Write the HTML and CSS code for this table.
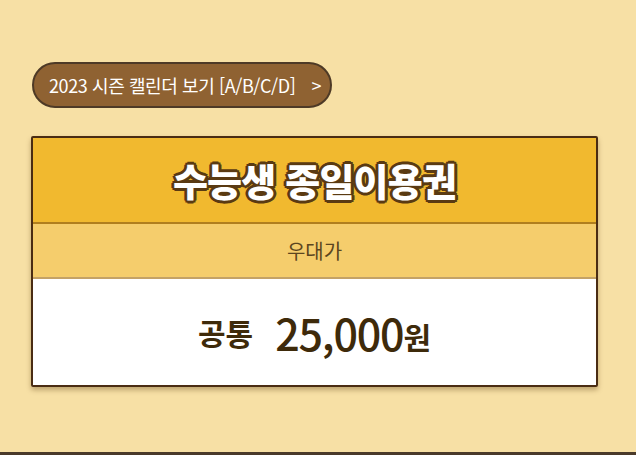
FILE: index.html
```html
<!DOCTYPE html>
<html lang="ko">
<head>
    <meta charset="UTF-8">
    <meta name="viewport" content="width=device-width, initial-scale=1.0">
    <title>수능생 종일이용권</title>
    <link rel="stylesheet" href="styles.css">
</head>
<body>
    <div class="wrap">
        <a class="cal-btn" href="#">2023 시즌 캘린더 보기 [A/B/C/D]<span class="arrow">&gt;</span></a>
        <div class="ticket">
            <div class="ticket-title">수능생 종일이용권</div>
            <div class="ticket-sub">우대가</div>
            <div class="ticket-price">
                <span class="label">공통</span>
                <span class="num">25,000</span><span class="won">원</span>
            </div>
        </div>
    </div>
    <div class="foot"></div>
</body>
</html>
```

FILE: styles.css
```css
* {
    padding: 0;
    margin: 0;
    box-sizing: border-box;
}
body {
    background: #f7e0a5;
    font-family: "Noto Sans CJK KR", "Noto Sans", sans-serif;
    overflow: hidden;
}
.wrap {
    height: 452px;
    padding: 62px 38px 0 31px;
}
.cal-btn {
    display: flex;
    align-items: center;
    width: 300px;
    height: 46px;
    margin-left: 1px;
    padding: 0 0 1px 15px;
    border: 2px solid #4e3a26;
    border-radius: 23px;
    background: #8f6232;
    color: #fff;
    font-size: 18px;
    letter-spacing: -0.4px;
    text-decoration: none;
}
.cal-btn .arrow {
    margin-left: 16px;
}
.ticket {
    margin-top: 28px;
    width: 567px;
    border: 2px solid #4a2c13;
    border-radius: 2px;
    box-shadow: 0 3px 5px rgba(80, 50, 10, 0.35);
    text-align: center;
}
.ticket-title {
    height: 86px;
    line-height: 84px;
    background: #f1b92f;
    border-bottom: 2px solid #b07e1e;
    color: #fff;
    font-size: 38px;
    font-weight: 900;
    letter-spacing: -0.8px;
    text-shadow: 2px 0 0 #5a3a12, -2px 0 0 #5a3a12, 0 2px 0 #5a3a12, 0 -2px 0 #5a3a12,
        2px 2px 0 #5a3a12, -2px -2px 0 #5a3a12, 2px -2px 0 #5a3a12, -2px 2px 0 #5a3a12,
        3px 0 0 #5a3a12, -3px 0 0 #5a3a12, 0 3px 0 #5a3a12, 0 -3px 0 #5a3a12;
}
.ticket-sub {
    height: 55px;
    line-height: 53px;
    background: #f5cd6c;
    border-bottom: 2px solid #c4a266;
    color: #5b4520;
    font-size: 20px;
}
.ticket-price {
    height: 106px;
    display: flex;
    align-items: center;
    justify-content: center;
    background: #fff;
    color: #3e2a0a;
}
.ticket-price .label {
    font-size: 30px;
    font-weight: 700;
    margin-right: 22px;
}
.ticket-price .num {
    font-size: 43px;
    font-weight: 500;
    letter-spacing: -1.2px;
}
.ticket-price .won {
    font-size: 30px;
    font-weight: 700;
    margin-top: 8px;
}
.foot {
    height: 10px;
    background: #4a3a2a;
}
```
